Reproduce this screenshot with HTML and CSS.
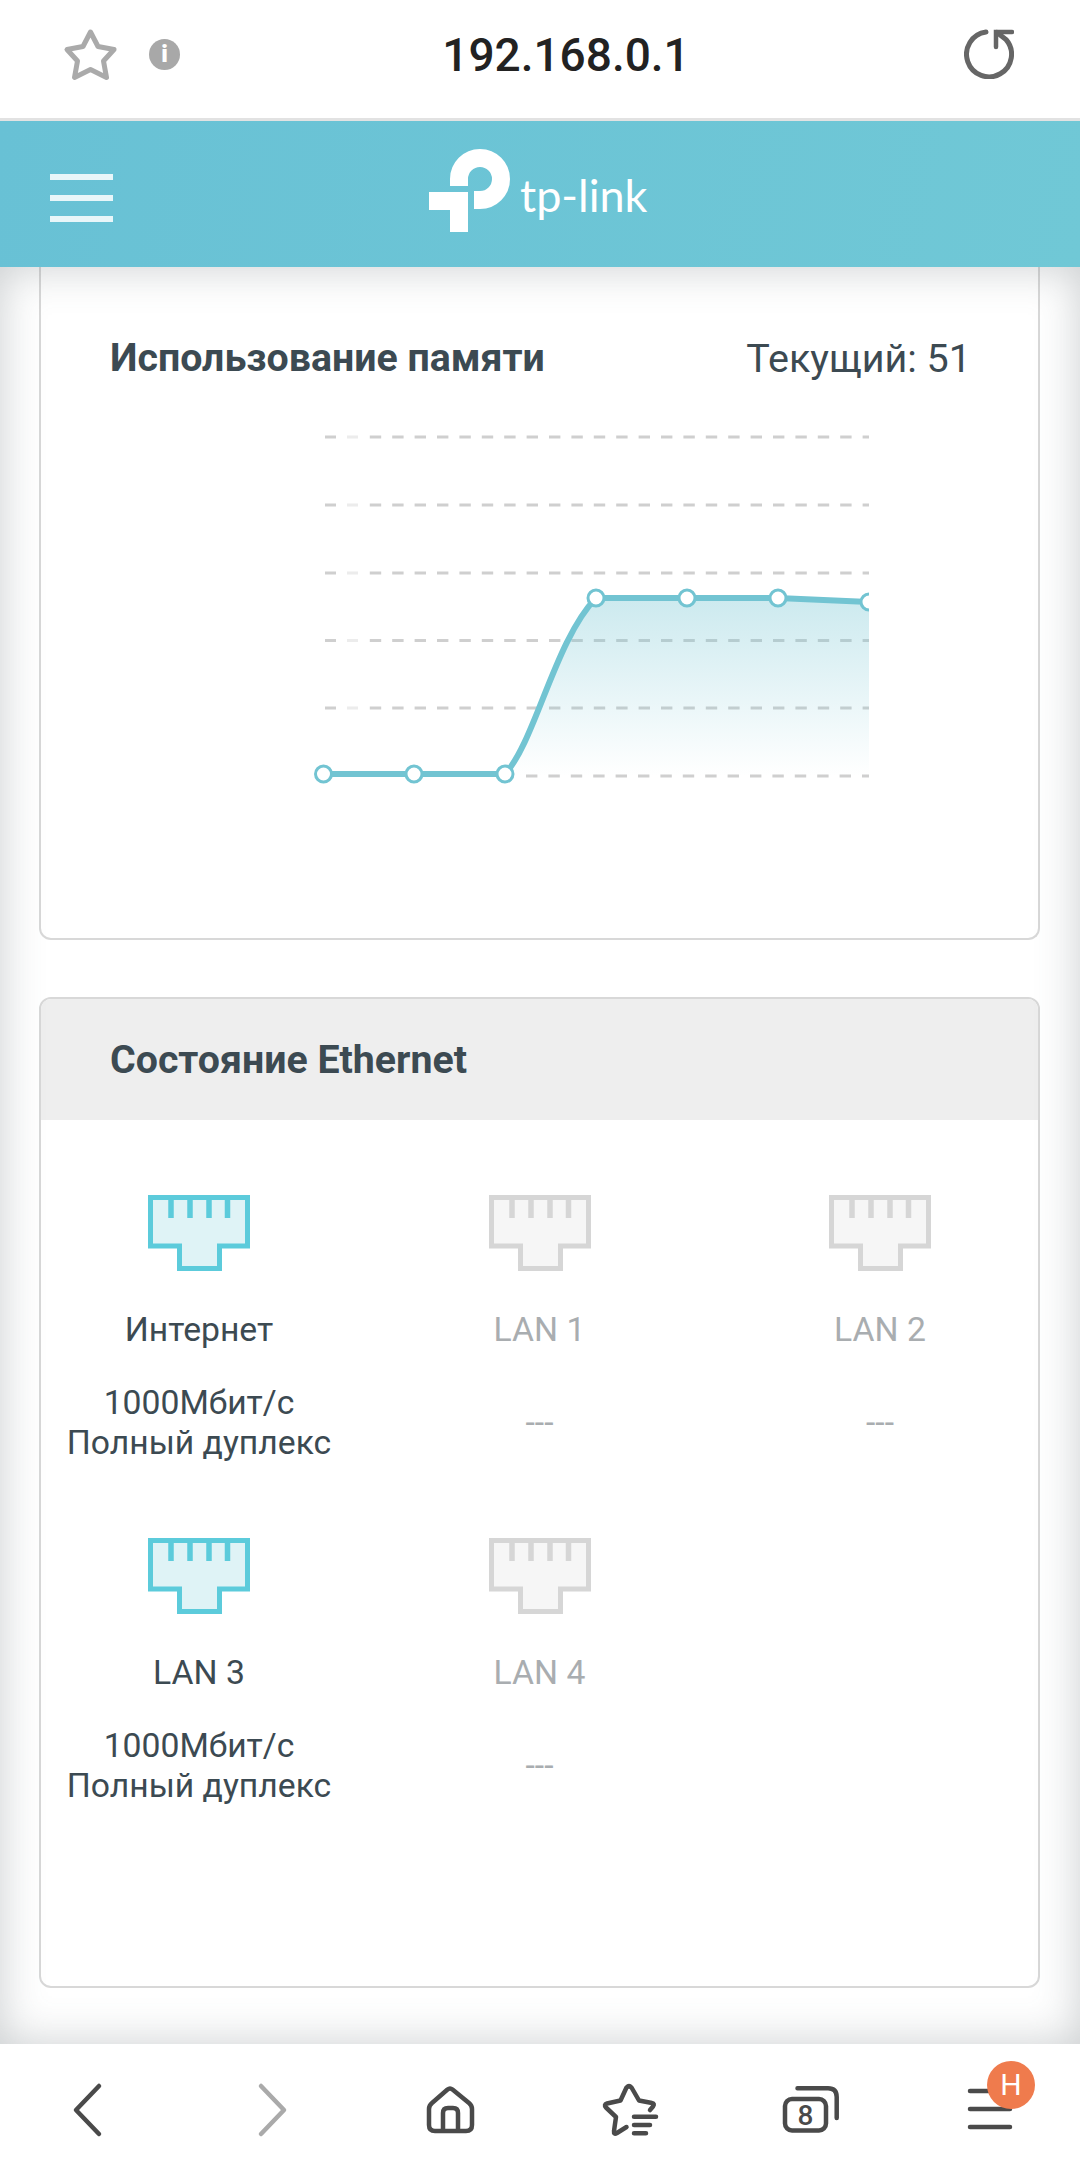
FILE: index.html
```html
<!DOCTYPE html>
<html lang="ru">
<head>
    <meta charset="UTF-8">
    <meta name="viewport" content="width=device-width, initial-scale=1.0">
    <title>192.168.0.1</title>
    <link rel="stylesheet" href="styles.css">
</head>
<body>
    <div class="address-bar">
        <svg class="icon-star" width="55" height="53" viewBox="0 0 55 53">
            <path d="M27.5 4 L35 18.5 L51 21.5 L40.5 33 L43.5 49.5 L27.5 41.5 L11.5 49.5 L14.5 33 L4 21.5 L20 18.5 Z" fill="none" stroke="#aaa" stroke-width="5" stroke-linejoin="round"/>
        </svg>
        <div class="icon-info">i</div>
        <div class="url">192.168.0.1</div>
        <svg class="icon-reload" width="50" height="50" viewBox="0 0 50 50">
            <path d="M22 3 A22.5 22.5 0 1 0 42 10.5 L33 3.5" fill="none" stroke="#666" stroke-width="5" stroke-linecap="round"/>
            <path d="M32 18 V3 H48" fill="none" stroke="#666" stroke-width="4.5" stroke-linecap="round"/>
        </svg>
    </div>

    <header class="top-header">
        <div class="menu-btn"><span></span><span></span><span></span></div>
        <div class="logo">
            <svg width="82" height="84" viewBox="0 0 82 84">
                <path d="M30 37 V30 A21 21 0 1 1 51 51 H45" fill="none" stroke="#fff" stroke-width="18"/>
                <path d="M0 43 H39 V83 H21 V61 H0 Z" fill="#fff"/>
            </svg>
            <span class="logo-text">tp-link</span>
        </div>
    </header>

    <main class="content">
        <section class="card card-memory">
            <div class="memory-head">
                <h2>Использование памяти</h2>
                <span class="current">Текущий: 51</span>
            </div>
            <svg class="chart" width="570" height="360" viewBox="310 430 570 360">
                <defs>
                    <linearGradient id="areaFill" x1="0" y1="0" x2="0" y2="1">
                        <stop offset="0" stop-color="#72c4d2" stop-opacity="0.36"/>
                        <stop offset="1" stop-color="#72c4d2" stop-opacity="0"/>
                    </linearGradient>
                    <clipPath id="plot"><rect x="300" y="420" width="569" height="380"/></clipPath>
                </defs>
                <g class="grid">
                    <path d="M369.8 437 H869 M369.8 505 H869 M369.8 573 H869 M369.8 640.5 H869 M369.8 708 H869 M526 776 H869"/>
                </g>
                <g class="grid-stub">
                    <path d="M325 437 h11 M325 505 h11 M325 573 h11 M325 640.5 h11 M325 708 h11"/>
                </g>
                <g class="grid-faint">
                    <path d="M347 437 h11 M347 505 h11 M347 573 h11 M347 640.5 h11 M347 708 h11"/>
                </g>
                <g clip-path="url(#plot)">
                    <path d="M505 776 C535 742 555 640 596 598 H778 L869 602 V776 Z" fill="url(#areaFill)"/>
                    <path d="M323.5 774 H505 C535 742 555 640 596 598 H778 L869 602" fill="none" stroke="#72c4d2" stroke-width="6"/>
                    <g class="dots">
                        <circle cx="323.5" cy="774" r="8"/>
                        <circle cx="414" cy="774" r="8"/>
                        <circle cx="505" cy="774" r="8"/>
                        <circle cx="596" cy="598" r="8"/>
                        <circle cx="687" cy="598" r="8"/>
                        <circle cx="778" cy="598" r="8"/>
                        <circle cx="869" cy="602" r="8"/>
                    </g>
                </g>
            </svg>
        </section>

        <section class="card card-ethernet">
            <h2 class="card-title">Состояние Ethernet</h2>
            <div class="ports">
                <div class="port active">
                    <svg class="port-icon" width="102" height="76" viewBox="0 0 102 76"><path class="shell" d="M2.5 2.5 H99.5 V51 H71.5 V73.5 H31.5 V51 H2.5 Z"/><path class="pins" d="M23 3 V23 M42 3 V23 M61 3 V23 M79.5 3 V23"/></svg>
                    <div class="port-name">Интернет</div>
                    <div class="port-speed">1000Мбит/с<br>Полный дуплекс</div>
                </div>
                <div class="port">
                    <svg class="port-icon" width="102" height="76" viewBox="0 0 102 76"><path class="shell" d="M2.5 2.5 H99.5 V51 H71.5 V73.5 H31.5 V51 H2.5 Z"/><path class="pins" d="M23 3 V23 M42 3 V23 M61 3 V23 M79.5 3 V23"/></svg>
                    <div class="port-name">LAN 1</div>
                    <div class="port-speed">---</div>
                </div>
                <div class="port">
                    <svg class="port-icon" width="102" height="76" viewBox="0 0 102 76"><path class="shell" d="M2.5 2.5 H99.5 V51 H71.5 V73.5 H31.5 V51 H2.5 Z"/><path class="pins" d="M23 3 V23 M42 3 V23 M61 3 V23 M79.5 3 V23"/></svg>
                    <div class="port-name">LAN 2</div>
                    <div class="port-speed">---</div>
                </div>
                <div class="port active">
                    <svg class="port-icon" width="102" height="76" viewBox="0 0 102 76"><path class="shell" d="M2.5 2.5 H99.5 V51 H71.5 V73.5 H31.5 V51 H2.5 Z"/><path class="pins" d="M23 3 V23 M42 3 V23 M61 3 V23 M79.5 3 V23"/></svg>
                    <div class="port-name">LAN 3</div>
                    <div class="port-speed">1000Мбит/с<br>Полный дуплекс</div>
                </div>
                <div class="port">
                    <svg class="port-icon" width="102" height="76" viewBox="0 0 102 76"><path class="shell" d="M2.5 2.5 H99.5 V51 H71.5 V73.5 H31.5 V51 H2.5 Z"/><path class="pins" d="M23 3 V23 M42 3 V23 M61 3 V23 M79.5 3 V23"/></svg>
                    <div class="port-name">LAN 4</div>
                    <div class="port-speed">---</div>
                </div>
            </div>
        </section>
    </main>

    <nav class="bottom-bar">
        <svg class="nav-icon" width="60" height="60" viewBox="0 0 60 60"><path d="M39 6 L16 30 L39 54" stroke="#4a4a4a"/></svg>
        <svg class="nav-icon" width="60" height="60" viewBox="0 0 60 60"><path d="M21 6 L44 30 L21 54" stroke="#aaa"/></svg>
        <svg class="nav-icon" width="60" height="60" viewBox="0 0 60 60"><path d="M27.5 9.5 Q30 7.5 32.5 9.5 L49 23 Q52 25.5 52 29 V45 Q52 51 46 51 H15 Q9 51 9 45 V29 Q9 25.5 12 23 Z M23 51 V33 Q23 28 28 28 H33 Q38 28 38 33 V51" stroke="#4a4a4a"/></svg>
        <svg class="nav-icon" width="60" height="60" viewBox="0 0 60 60"><path d="M50 30 L53 26.5 Q55 23.5 52 23 L39 20.5 L31.5 7.5 Q29 5 26.5 7.5 L20.5 20.5 L7 23.5 Q3.5 24.5 6 27.5 L16 37 L14 51 Q13.5 55 17 53 L26.5 47 M34 36.7 H56 M34 45 H50 M34 53.3 H46" stroke="#4a4a4a"/></svg>
        <svg class="nav-icon" width="60" height="60" viewBox="0 0 60 60"><rect x="5" y="19" width="41" height="31.5" rx="7" stroke="#4a4a4a"/><path d="M17.5 8.3 H48 Q56.7 8.3 56.7 17 V38" stroke="#4a4a4a"/><text x="25.5" y="45" class="tab-count">8</text></svg>
        <div class="nav-menu">
            <svg class="nav-icon" width="60" height="60" viewBox="0 0 60 60"><path d="M10 11 H50 M10 29 H50 M10 47 H50" stroke="#4a4a4a"/></svg>
            <div class="badge">H</div>
        </div>
    </nav>
</body>
</html>
```

FILE: styles.css
```css
* {
    box-sizing: border-box;
}
html, body {
    margin: 0;
    padding: 0;
}
body {
    width: 1080px;
    height: 2182px;
    display: flex;
    flex-direction: column;
    overflow: hidden;
    font-family: Roboto, "Noto Sans", sans-serif;
    color: #3c4a52;
    background-color: #fff;
}

/* browser address bar */
.address-bar {
    height: 121px;
    flex: none;
    display: flex;
    align-items: center;
    padding: 0 66px 10px 63px;
    border-bottom: 3px solid #e2e2e2;
}
.icon-star {
    flex: none;
}
.icon-info {
    width: 31px;
    height: 31px;
    margin-left: 31px;
    border-radius: 50%;
    background-color: #a8a8a8;
    color: #fff;
    font-size: 24px;
    font-weight: 900;
    line-height: 31px;
    text-align: center;
}
.url {
    flex: 1;
    margin-top: 2px;
    padding-right: 12px;
    text-align: center;
    font-size: 46px;
    font-weight: 500;
    color: #222;
}
.icon-reload {
    flex: none;
}

/* router page header */
.top-header {
    height: 146px;
    flex: none;
    display: flex;
    align-items: center;
    padding: 0 50px;
    background: linear-gradient(100deg, #68c1d5, #70c8d6);
}
.menu-btn {
    width: 63px;
    display: flex;
    flex-direction: column;
    gap: 15.5px;
    margin-top: 8px;
}
.menu-btn span {
    height: 5.5px;
    background-color: #fff;
    opacity: 0.85;
}
.logo {
    display: flex;
    align-items: flex-end;
    margin-left: 316px;
    margin-top: -6px;
}
.logo-text {
    margin: 0 0 7px 9px;
    font-family: Lato, sans-serif;
    font-size: 45px;
    font-weight: 400;
    line-height: 62px;
    color: #fff;
}

/* page */
.content {
    flex: 1;
    position: relative;
    overflow: hidden;
    padding: 0 40px 0 39px;
}
.content::after {
    content: "";
    position: absolute;
    inset: 0;
    box-shadow: inset 0 0 44px rgba(90, 100, 105, 0.32);
    pointer-events: none;
}
.card {
    border: 2px solid #d8d8d8;
    border-radius: 12px;
    background-color: #fff;
}
.card-memory {
    height: 673px;
    border-top: none;
    border-top-left-radius: 0;
    border-top-right-radius: 0;
    margin-bottom: 57px;
    padding: 64px 67px 0 69px;
}
.memory-head {
    display: flex;
    justify-content: space-between;
    align-items: center;
    height: 54px;
}
h2 {
    margin: 0;
    font-size: 39.3px;
    font-weight: 700;
    color: #3c4a52;
}
.current {
    font-size: 39.5px;
}
.chart {
    display: block;
    margin: 45px 0 0 200px;
}
.grid path, .grid-stub path, .grid-faint path {
    fill: none;
    stroke-width: 3px;
}
.grid path {
    stroke: #cfcfcf;
    stroke-dasharray: 11.4 11;
}
.grid-stub path {
    stroke: #cfcfcf;
}
.grid-faint path {
    stroke: #ececec;
}
.dots circle {
    fill: #fff;
    stroke: #72c4d2;
    stroke-width: 3px;
}

/* ethernet */
.card-ethernet {
    height: 991px;
    overflow: hidden;
}
.card-title {
    height: 121px;
    padding: 0 69px;
    line-height: 123px;
    background-color: #eee;
}
.ports {
    display: grid;
    grid-template-columns: repeat(3, 314px);
    column-gap: 26.5px;
    padding: 75px 0 0 1px;
}
.port {
    height: 343px;
    text-align: center;
    font-size: 33.7px;
    color: #3c4a52;
}
.port-icon {
    display: block;
    margin: 0 auto;
}
.port-icon .shell {
    fill: #f6f6f6;
    stroke: #d6d6d6;
    stroke-width: 5px;
}
.port-icon .pins {
    fill: none;
    stroke: #d6d6d6;
    stroke-width: 5.5px;
}
.port.active .shell {
    fill: #dff3f6;
    stroke: #5ccbdb;
}
.port.active .pins {
    stroke: #5ccbdb;
}
.port-name {
    margin-top: 38px;
    line-height: 42px;
}
.port-speed {
    display: flex;
    align-items: center;
    justify-content: center;
    height: 80px;
    margin-top: 32px;
    line-height: 40px;
}
.port:not(.active) .port-name, .port:not(.active) .port-speed {
    color: #a9adb0;
}

/* browser bottom bar */
.bottom-bar {
    height: 138px;
    flex: none;
    display: grid;
    grid-template-columns: repeat(6, 180px);
    justify-items: center;
    padding-top: 36px;
    background-color: #fff;
}
.nav-icon {
    display: block;
}
.nav-icon path, .nav-icon rect {
    fill: none;
    stroke-width: 4.5px;
    stroke-linecap: round;
    stroke-linejoin: round;
}
.tab-count {
    font-size: 28px;
    font-weight: 500;
    fill: #4a4a4a;
    text-anchor: middle;
}
.nav-menu {
    position: relative;
    width: 60px;
    height: 60px;
}
.badge {
    position: absolute;
    top: -19px;
    left: 27px;
    width: 48px;
    height: 48px;
    border-radius: 50%;
    background-color: #ef7b4d;
    color: #fff;
    font-size: 30px;
    line-height: 48px;
    text-align: center;
}
```
